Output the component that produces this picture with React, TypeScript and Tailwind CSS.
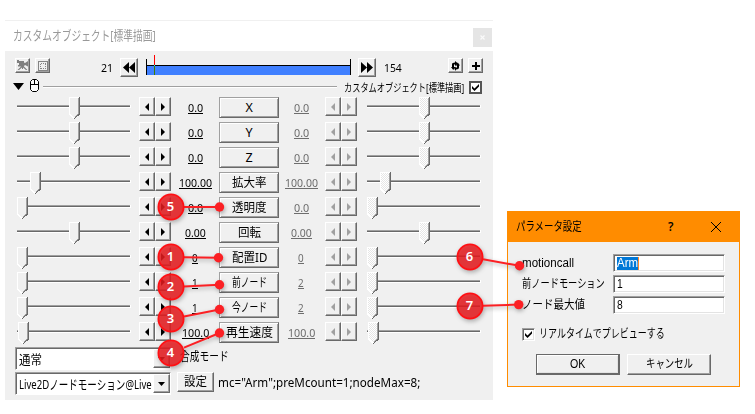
import React, { useLayoutEffect, useRef, useState } from "react";

/* Text squeezed horizontally to a given width, like the narrow system fonts. */
function Fit({ w, className = "", children }: { w: number; className?: string; children: React.ReactNode }) {
  const ref = useRef<HTMLSpanElement>(null);
  const [scale, setScale] = useState(1);
  useLayoutEffect(() => {
    if (ref.current) setScale(w / ref.current.offsetWidth);
  }, [w]);
  return (
    <span className={"block shrink-0 whitespace-nowrap " + className} style={{ width: w }}>
      <span ref={ref} className="inline-block origin-left" style={{ transform: `scaleX(${scale})` }}>
        {children}
      </span>
    </span>
  );
}

const RAISED =
  "flex shrink-0 items-center justify-center bg-[#f0f0f0] border border-t-white border-l-white border-r-[#696969] border-b-[#696969] shadow-[inset_-1px_-1px_0_#a0a0a0]";

function Arrow({ right, dim }: { right?: boolean; dim?: boolean }) {
  return (
    <div className={RAISED + " h-[19px] w-4"}>
      <svg width="4" height="8" viewBox="0 0 4 8" className={right ? "rotate-180" : ""}>
        <path d="M0 4 4 0V8Z" fill={dim ? "#a0a0a0" : "#000"} />
      </svg>
    </div>
  );
}

function Slider({ pos, dim }: { pos: number; dim?: boolean }) {
  return (
    <svg width="114" height="23" viewBox="0 0 114 23" className="shrink-0" shapeRendering="crispEdges">
      <defs>
        <pattern id="dither" width="2" height="2" patternUnits="userSpaceOnUse">
          <rect width="2" height="2" fill="#fff" />
          <rect width="1" height="1" fill="#e6e6e6" />
          <rect x="1" y="1" width="1" height="1" fill="#e6e6e6" />
        </pattern>
      </defs>
      <path d="M0 8.5H113" stroke="#a0a0a0" />
      <path d="M0 9.5H113" stroke="#696969" />
      <path d="M0 10.5H114M113.5 8V11" stroke="#fff" />
      <g transform={`translate(${pos} 0)`}>
        <path d="M0 0H11V17L5.5 22 0 17Z" fill={dim ? "url(#dither)" : "#f0f0f0"} />
        <path d="M10.5 0V17L5.5 21.5" fill="none" stroke="#696969" />
        <path d="M9.5 1V16.5L5.5 20.5" fill="none" stroke="#a0a0a0" />
        <path d="M10 .5H.5V17L5 21.5" fill="none" stroke="#fff" />
      </g>
    </svg>
  );
}

function Value({ text, w, dim }: { text: string; w: number; dim?: boolean }) {
  return (
    <div className={"flex w-12 shrink-0 justify-center pt-[3px] " + (dim ? "pr-1" : "")}>
      <Fit w={w} className={"h-[14px] border-b text-[11.5px] leading-[15px] " + (dim ? "border-[#6d6d6d] text-[#6d6d6d]" : "border-black text-black")}>
        {text}
      </Fit>
    </div>
  );
}

type Row = { label: string; lw: number; left: string; right: string; w: number; pos: number };
const ROWS: Row[] = [
  { label: "X", lw: 7, left: "0.0", right: "0.0", w: 15, pos: 52 },
  { label: "Y", lw: 7, left: "0.0", right: "0.0", w: 15, pos: 52 },
  { label: "Z", lw: 7, left: "0.0", right: "0.0", w: 15, pos: 52 },
  { label: "拡大率", lw: 35, left: "100.00", right: "100.00", w: 33, pos: 13 },
  { label: "透明度", lw: 35, left: "0.0", right: "0.0", w: 15, pos: 0 },
  { label: "回転", lw: 23, left: "0.00", right: "0.00", w: 21, pos: 52 },
  { label: "配置ID", lw: 35, left: "0", right: "0", w: 6, pos: 0 },
  { label: "前ノード", lw: 35, left: "1", right: "2", w: 6, pos: 0 },
  { label: "今ノード", lw: 35, left: "1", right: "2", w: 6, pos: 0 },
  { label: "再生速度", lw: 47, left: "100.0", right: "100.0", w: 27, pos: 1 },
];

function ParamRow({ r }: { r: Row }) {
  return (
    <div className="flex h-[25px] items-start pl-3">
      <Slider pos={r.pos} />
      <div className="ml-2 flex">
        <Arrow />
        <Arrow right />
      </div>
      <Value text={r.left} w={r.w} />
      <div className="flex h-[21px] w-[60px] shrink-0 items-center justify-center border border-[#a0a0a0] border-r-[#696969] border-b-[#696969] bg-[#f0f0f0] shadow-[inset_1px_1px_0_#fff,inset_-1px_-1px_0_#a0a0a0]">
        <Fit w={r.lw} className="text-[12.5px] leading-[18px] text-black">{r.label}</Fit>
      </div>
      <Value text={r.right} w={r.w} dim />
      <div className="-ml-0.5 flex">
        <Arrow dim />
        <Arrow right dim />
      </div>
      <div className="ml-[10px]">
        <Slider pos={r.pos} dim />
      </div>
    </div>
  );
}

function Check() {
  return (
    <svg width="7" height="7" viewBox="0 0 7 7">
      <path d="M0 2 2.5 4.5 7 0V2.5L2.5 7 0 4.5Z" fill="#000" />
    </svg>
  );
}

function Combo({ text, w }: { text: string; w: number }) {
  return (
    <div className="flex h-[23px] w-[156px] shrink-0 items-stretch border border-[#a0a0a0] border-r-white border-b-white bg-white shadow-[inset_1px_1px_0_#696969]">
      <div className="w-[137px] overflow-hidden pl-[3px]">
        <Fit w={w} className="text-[13px] leading-[22px] text-black">{text}</Fit>
      </div>
      <div className={RAISED + " my-px w-[17px]"}>
        <svg width="7" height="4" viewBox="0 0 7 4"><path d="M0 0H7L3.5 4Z" /></svg>
      </div>
    </div>
  );
}

function DoubleArrow({ right }: { right?: boolean }) {
  return (
    <div className={RAISED + " h-[19px] w-[18px]"}>
      <svg width="12" height="11" viewBox="0 0 12 11" className={right ? "rotate-180" : ""}>
        <path d="M0 5.5 6 0V11ZM6 5.5 12 0V11Z" />
      </svg>
    </div>
  );
}

function MainWindow() {
  return (
    <div className="mt-5 ml-[5px] flex h-[380px] w-[488px] shrink-0 flex-col bg-[#f0f0f0] font-['Noto_Sans','Noto_Sans_CJK_JP',sans-serif]">
      <div className="flex h-[31px] shrink-0 justify-between border-t border-[#f0f0f0] bg-white pl-2">
        <Fit w={143} className="text-[13px] leading-[29px] text-[#999]">カスタムオブジェクト[標準描画]</Fit>
        <div className="mt-[7px] mr-px flex h-[19px] w-[19px] items-center justify-center bg-[#e5e5e5]">
          <svg width="5" height="5" viewBox="0 0 5 5"><path d="M.5.5 4.5 4.5M4.5.5.5 4.5" stroke="#fafafa" strokeWidth="1.2" /></svg>
        </div>
      </div>
      <div className="flex h-7 shrink-0 items-start pt-[7px] pl-[10px]">
        <div className={RAISED + " h-[15px] w-[15px]"}>
          <svg width="12" height="11" viewBox="0 0 12 11" fill="#808080">
            <path d="M0 0H2V1H7V2.5L8 3 11 1V6.5L8 5 7 6V6.5L10.5 10H9L6 7.5V9H5V7.5L2 10H.5L4 6.5H1V5H2V3H0Z" />
          </svg>
        </div>
        <div className={RAISED + " ml-[5px] h-[15px] w-[15px]"}>
          <svg width="10" height="10" viewBox="0 0 10 10" fill="none" stroke="#858585" shapeRendering="crispEdges">
            <path d="M.5.5H9.5V9.5H.5Z" />
            <path d="M3 2.5H8M3 7.5H8M2.5 3V8M7.5 3V8" strokeDasharray="1 1" />
          </svg>
        </div>
        <Fit w={12} className="ml-[51px] text-[11.5px] leading-[19px] text-black">21</Fit>
        <div className="ml-[7px]"><DoubleArrow /></div>
        <svg width="205" height="22" viewBox="0 0 205 22" className="-mt-[3px] ml-2 shrink-0" shapeRendering="crispEdges">
          <path d="M1 11H204V20H1Z" fill="#4080ff" />
          <path d="M.5 4V20M204.5 4V20M0 10.5H205" stroke="#000" />
          <path d="M8.5 0V10" stroke="#f00" />
          <path d="M8.5 10V11" stroke="#0ff" />
          <path d="M8.5 11V20" stroke="#408000" />
        </svg>
        <div className="ml-[7px]"><DoubleArrow right /></div>
        <Fit w={18} className="ml-2 text-[11.5px] leading-[19px] text-black">154</Fit>
        <div className={RAISED + " ml-[46px] h-[15px] w-[15px]"}>
          <svg width="9" height="10" viewBox="0 0 9 10">
            <path d="M4 0 7 2.5 4 5V3.5H3V6H4.5L2.2 9 0 6H1V3.5Q1 1.6 4 1.6Z" />
            <path d="M5 10 3.2 7.8 5 5.6V6.6H6V4.5H4.8L6.8 1.5 9 4.5H8V6.5Q8 8.4 5 8.4Z" />
          </svg>
        </div>
        <div className={RAISED + " ml-[5px] h-[15px] w-[15px]"}>
          <svg width="8" height="8" viewBox="0 0 8 8" shapeRendering="crispEdges"><path d="M3 0H5V3H8V5H5V8H3V5H0V3H3Z" /></svg>
        </div>
      </div>
      <div className="flex h-[18px] shrink-0 items-start pl-2">
        <svg width="11" height="7" viewBox="0 0 11 7" className="mt-1 shrink-0"><path d="M0 0H11L5.5 7Z" /></svg>
        <svg width="9" height="13" viewBox="0 0 9 13" className="ml-1.5 shrink-0" fill="#fff" stroke="#000">
          <path d="M2.5.5H6.5L8.5 2.5V10.5L6.5 12.5H2.5L.5 10.5V2.5ZM.5 5.5H8.5M4.5 0V5.5" />
        </svg>
        <div className="mt-[7px] ml-1 h-0.5 w-[294px] shrink-0 border-t border-b border-t-[#a0a0a0] border-b-white" />
        <Fit w={120} className="ml-[7px] text-[11px] leading-[17px] text-black">カスタムオブジェクト[標準描画]</Fit>
        <div className="mt-[2px] ml-[5px] flex h-[13px] w-[13px] items-center justify-center border-2 border-[#555] bg-white"><Check /></div>
      </div>
      <div className="shrink-0">
        {ROWS.map((r) => <ParamRow key={r.label} r={r} />)}
      </div>
      <div className="flex h-[25px] shrink-0 pl-[10px]">
        <Combo text="通常" w={23} />
        <Fit w={49} className="ml-[9px] text-[12.5px] leading-[20px] text-black">合成モード</Fit>
      </div>
      <div className="flex h-[25px] shrink-0 pl-[10px]">
        <Combo text="Live2Dノードモーション@Live" w={133} />
        <div className={RAISED + " ml-1.5 h-5 w-[37px]"}>
          <Fit w={23} className="text-[12.5px] leading-[18px] text-black">設定</Fit>
        </div>
        <Fit w={202} className="ml-1 text-[12px] leading-[21px] text-black">mc="Arm";preMcount=1;nodeMax=8;</Fit>
      </div>
    </div>
  );
}

function Field({ label, w, children }: { label: string; w: number; children: React.ReactNode }) {
  return (
    <div className="flex h-[21px] items-start">
      <Fit w={w} className="text-[12px] leading-[18px]">{label}</Fit>
      <div className="ml-auto flex h-[18px] w-[112px] items-center border border-[#a0a0a0] border-r-white border-b-white bg-white pl-[3px] shadow-[inset_1px_1px_0_#696969,inset_-1px_-1px_0_#e3e3e3]">
        {children}
      </div>
    </div>
  );
}

function ParamDialog() {
  return (
    <div className="mt-[211px] ml-[14px] flex h-[176px] w-[233px] shrink-0 flex-col border border-[#ff8c00] bg-[#f0f0f0] font-['Liberation_Sans','Noto_Sans_CJK_JP',sans-serif] text-black">
      <div className="flex h-[30px] shrink-0 items-center bg-[#ff8c00] pl-2">
        <Fit w={66} className="text-[12px] leading-[30px]">パラメータ設定</Fit>
        <span className="ml-[86px] font-['Open_Sans'] text-[12px] leading-[30px] font-semibold">?</span>
        <svg width="10" height="10" viewBox="0 0 10 10" className="mr-[18px] ml-auto" stroke="#000"><path d="M0 0 10 10M10 0 0 10" /></svg>
      </div>
      <div className="flex flex-col pt-3 pr-[14px] pl-[14px]">
        <Field label="motioncall" w={52}>
          <div className="flex h-[13px] items-center border-r border-[#ff8728] bg-[#0078d7]">
            <Fit w={21} className="text-[12px] leading-[13px] text-white">Arm</Fit>
          </div>
        </Field>
        <Field label="前ノードモーション" w={83}><Fit w={6} className="text-[12px] leading-[14px]">1</Fit></Field>
        <Field label="ノード最大値" w={63}><Fit w={6} className="text-[12px] leading-[14px]">8</Fit></Field>
      </div>
      <div className="mt-[10px] ml-[14px] flex h-[15px] items-center">
        <div className="flex h-[13px] w-[13px] items-center justify-center border border-[#a0a0a0] border-r-white border-b-white bg-white shadow-[inset_1px_1px_0_#696969,inset_-1px_-1px_0_#e3e3e3]"><Check /></div>
        <Fit w={126} className="ml-1 text-[12px] leading-[15px]">リアルタイムでプレビューする</Fit>
      </div>
      <div className="mt-3 ml-7 flex gap-[7px]">
        <div className="flex h-[21px] w-[84px] items-center justify-center border border-r-2 border-b-2 border-[#696969] shadow-[inset_1px_1px_0_#fff,inset_-1px_-1px_0_#e3e3e3]">
          <Fit w={15} className="text-[12px] leading-[17px]">OK</Fit>
        </div>
        <div className={RAISED + " h-[21px] w-[84px]"}><Fit w={47} className="text-[12px] leading-[17px]">キャンセル</Fit></div>
      </div>
    </div>
  );
}

const PINS = [
  { n: 5, x: 171, y: 207, tx: 219.5, ty: 207 },
  { n: 1, x: 171, y: 257, tx: 218.5, ty: 257.8 },
  { n: 2, x: 171, y: 287, tx: 219.5, ty: 284.7 },
  { n: 3, x: 171, y: 319, tx: 219.5, ty: 309.5 },
  { n: 4, x: 171, y: 353, tx: 219.5, ty: 333 },
  { n: 6, x: 470, y: 257, tx: 519.5, ty: 265.8 },
  { n: 7, x: 470, y: 306, tx: 518.7, ty: 304.6 },
];

function Callouts() {
  return (
    <svg width="755" height="414" viewBox="0 0 755 414" className="pointer-events-none absolute top-0 left-0">
      {PINS.map((p) => (
        <g key={p.n}>
          <g className="drop-shadow-[1px_2px_2px_rgba(0,0,0,0.3)]">
            <path d={`M${p.x + 13} ${p.y + ((p.ty - p.y) * 13) / (p.tx - p.x)}L${p.tx} ${p.ty}`} stroke="#fb2024" strokeWidth="2" />
            <circle cx={p.tx} cy={p.ty} r="4.7" fill="#fb2024" />
            <circle cx={p.x} cy={p.y} r="12.6" fill="#ea1c1f" fillOpacity="0.84" stroke="#ff1014" strokeWidth="1.8" />
          </g>
          <text x={p.x - 0.5} y={p.y + 4} textAnchor="middle" fill="#fff" className="font-['Noto_Sans'] text-[13px] font-semibold">{p.n}</text>
        </g>
      ))}
    </svg>
  );
}

export default function App() {
  return (
    <div className="relative flex h-[414px] w-[755px] items-start overflow-hidden bg-white">
      <MainWindow />
      <ParamDialog />
      <Callouts />
    </div>
  );
}
